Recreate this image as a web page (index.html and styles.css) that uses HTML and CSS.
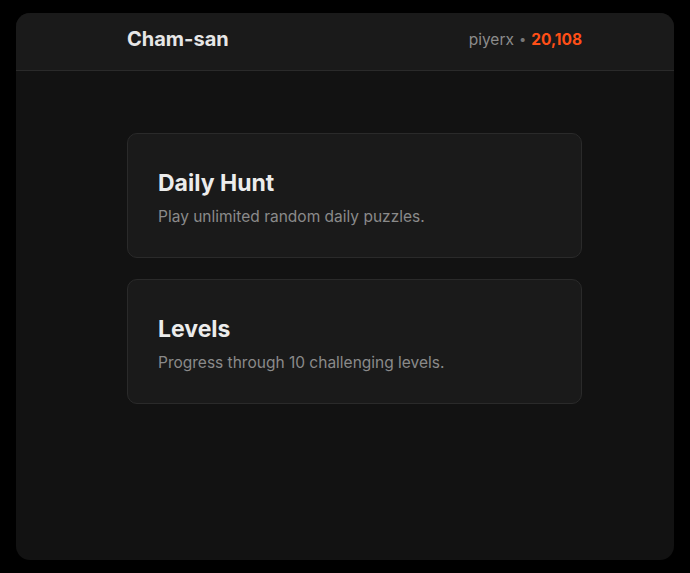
FILE: index.html
```html
<!DOCTYPE html>
<html lang="en">
<head>
    <meta charset="UTF-8">
    <meta name="viewport" content="width=device-width, initial-scale=1.0">
    <title>Cham-san</title>
    <link rel="stylesheet" href="styles.css">
</head>
<body>
    <div class="app">
        <header class="topbar">
            <div class="topbar-inner">
                <div class="brand">Cham-san</div>
                <div class="user">
                    <span class="username">piyerx</span>
                    <span class="dot">&bull;</span>
                    <span class="points">20,108</span>
                </div>
            </div>
        </header>
        <main class="content">
            <a class="mode-card" href="#">
                <h2>Daily Hunt</h2>
                <p>Play unlimited random daily puzzles.</p>
            </a>
            <a class="mode-card" href="#">
                <h2>Levels</h2>
                <p>Progress through 10 challenging levels.</p>
            </a>
        </main>
    </div>
</body>
</html>
```

FILE: styles.css
```css
body {
    margin: 0;
    padding: 13px 16px;
    background-color: #000;
    font-family: Inter, "Noto Sans", sans-serif;
    color: #e8e8e8;
}

.app {
    height: 547px;
    background-color: #121212;
    border-radius: 14px;
    overflow: hidden;
}

.topbar {
    background-color: #1a1a1a;
    border-bottom: 1px solid #2a2a2a;
    height: 58px;
    padding-bottom: 5px;
    box-sizing: border-box;
}

.topbar-inner {
    display: flex;
    justify-content: space-between;
    align-items: center;
    height: 100%;
    width: 455px;
    margin-left: 111px;
}

.brand {
    font-size: 20px;
    font-weight: 700;
    color: #e6e6e6;
}

.user {
    font-size: 15.5px;
    color: #8c8c8c;
    display: flex;
    align-items: center;
    gap: 5px;
}

.dot {
    font-size: 13px;
    color: #777;
}

.points {
    color: #ff4f17;
    font-weight: 700;
}

.content {
    width: 455px;
    margin-left: 111px;
    padding-top: 62px;
    display: flex;
    flex-direction: column;
    gap: 21px;
}

.mode-card {
    display: block;
    background-color: #1a1a1a;
    border: 1px solid #2a2a2a;
    border-radius: 10px;
    padding: 35px 30px 29px 30px;
    text-decoration: none;
}

.mode-card h2 {
    margin: 0;
    font-size: 23px;
    line-height: 28px;
    font-weight: 700;
    color: #ececec;
}

.mode-card p {
    margin: 9px 0 0;
    font-size: 15.5px;
    line-height: 22px;
    color: #8a8a8a;
}
```
